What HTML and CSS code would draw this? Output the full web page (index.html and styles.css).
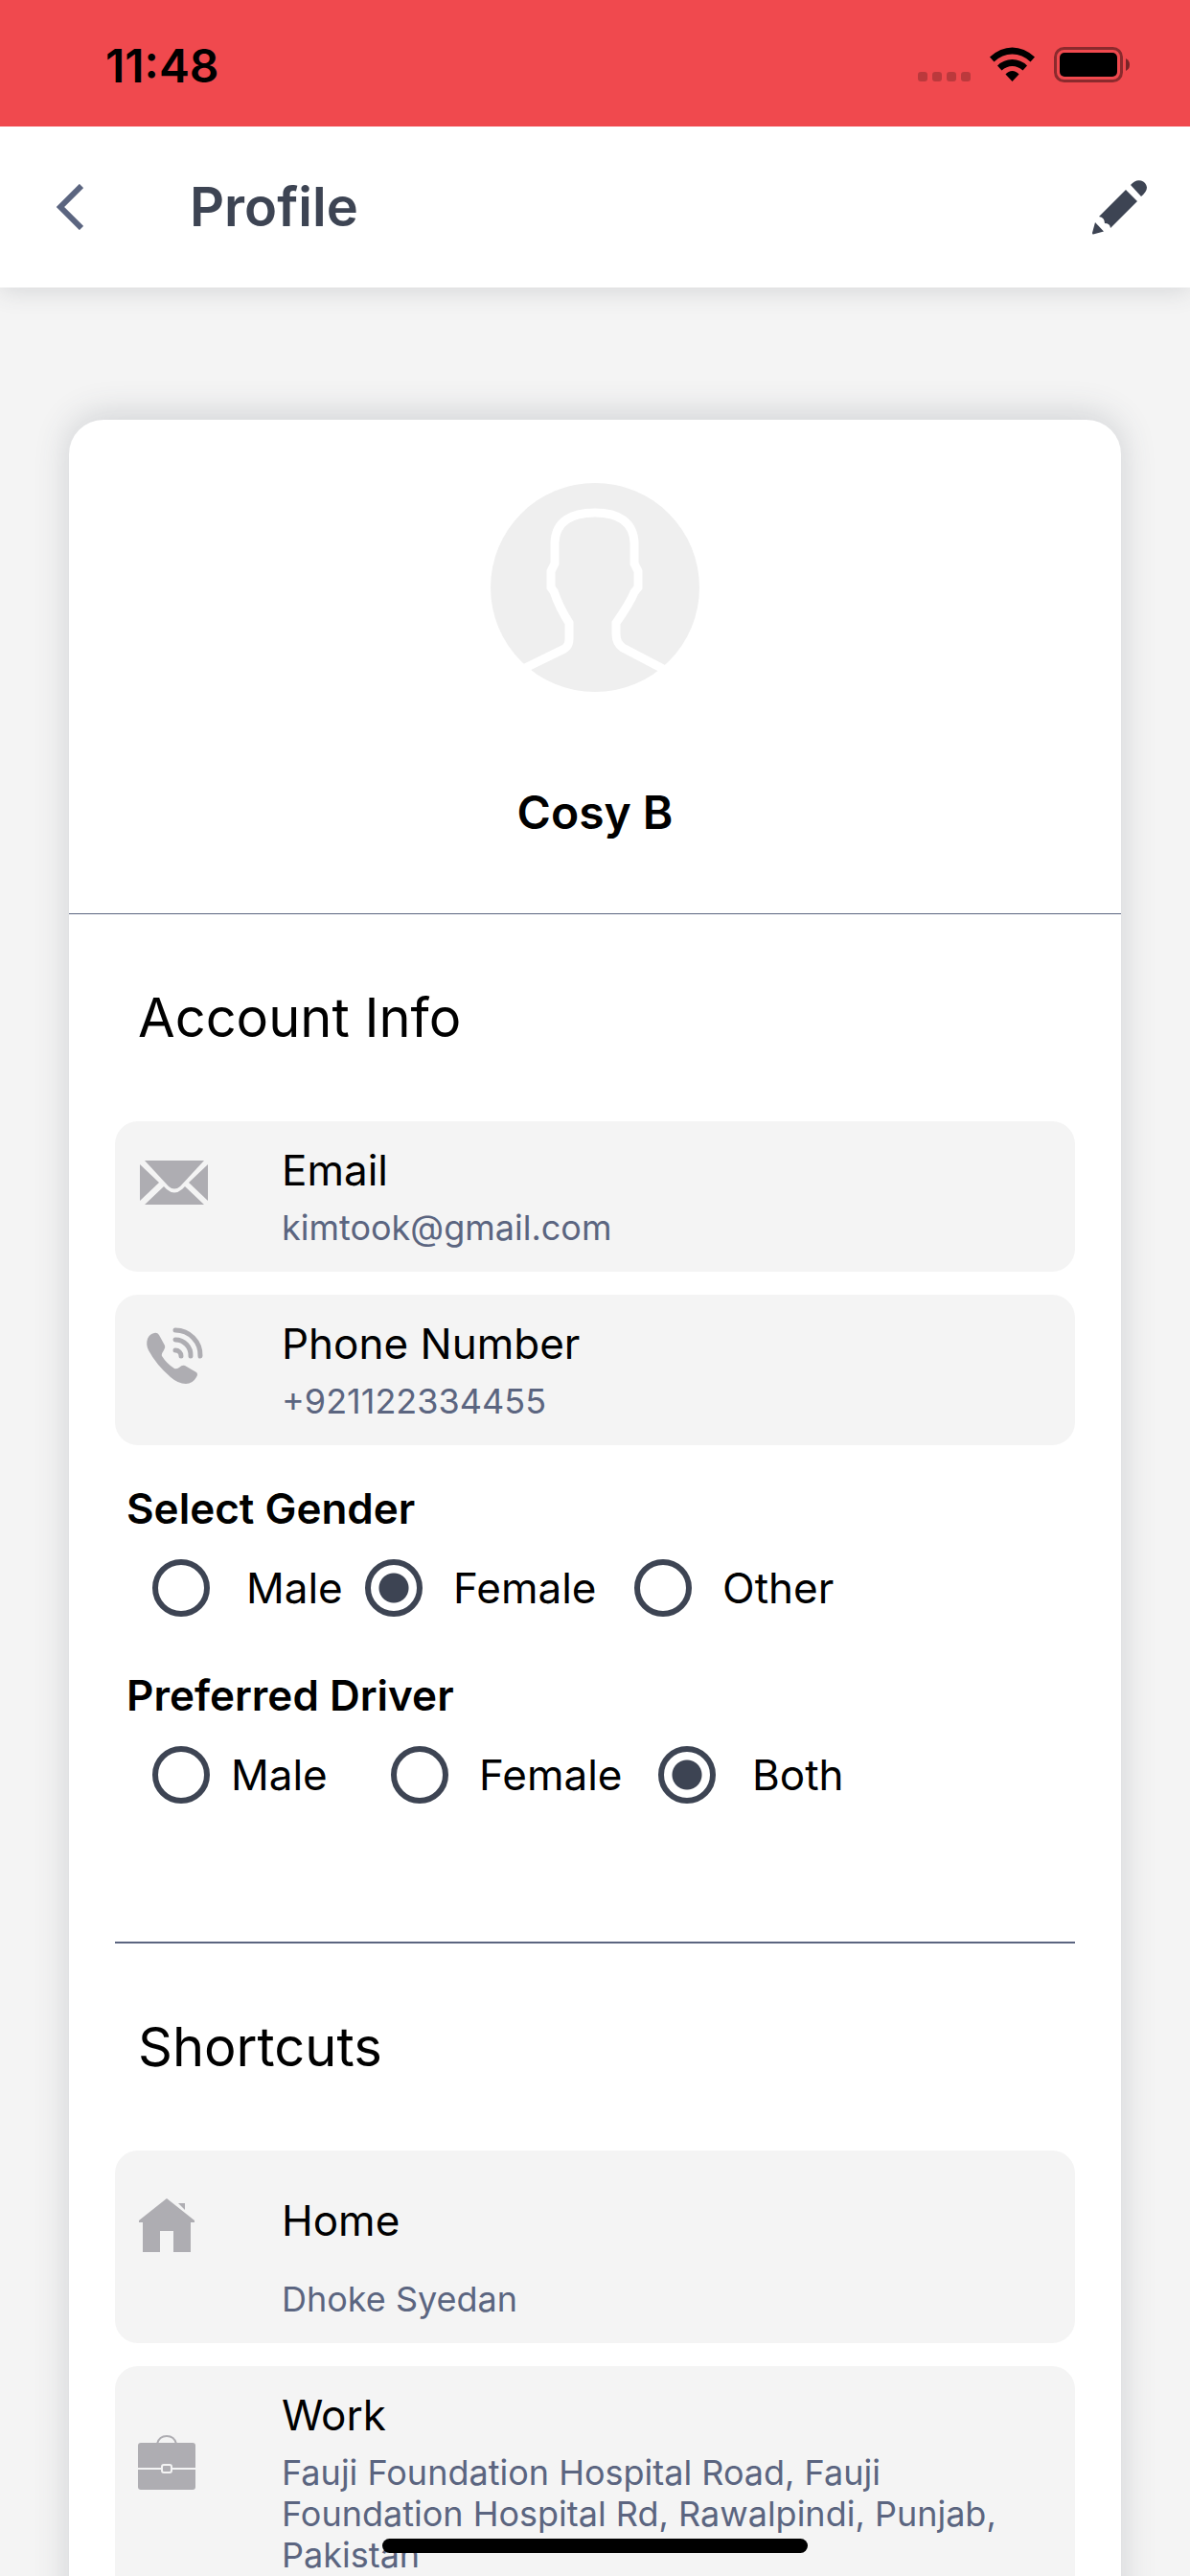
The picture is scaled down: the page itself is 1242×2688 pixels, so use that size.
FILE: index.html
```html
<!DOCTYPE html>
<html lang="en">
<head>
  <meta charset="UTF-8">
  <meta name="viewport" content="width=device-width, initial-scale=1.0">
  <title>Profile</title>
  <link rel="stylesheet" href="styles.css">
</head>
<body>
  <div class="status-bar">
    <span class="time">11:48</span>
    <svg class="status-icons" width="222" height="38" viewBox="0 0 222 38" aria-hidden="true">
      <g fill="#000" fill-opacity=".22">
        <rect x="0" y="26" width="10" height="10" rx="3"/>
        <rect x="15" y="26" width="10" height="10" rx="3"/>
        <rect x="30" y="26" width="10" height="10" rx="3"/>
        <rect x="45" y="26" width="10" height="10" rx="3"/>
      </g>
      <path d="M98.500 0.500Q111 0.500 122 10.500L117.500 15.500Q109 7.500 98.500 7.500T79.500 15.500L75 10.500Q86 0.500 98.500 0.500z"/>
      <path d="M98.500 13Q107.500 13 114 19.500L109.500 24.500Q104.500 20 98.500 20T87.500 24.500L83 19.500Q89.500 13 98.500 13z"/>
      <path d="M98.500 25Q102.500 25 105.500 28.500L98.500 36L91.500 28.500Q94.500 25 98.500 25z"/>
      <rect x="143.500" y="1.500" width="69" height="34" rx="9" fill="none" stroke="#000" stroke-opacity=".42" stroke-width="3"/>
      <rect x="148" y="6" width="60" height="25" rx="5"/>
      <path d="M217 12Q221 14 221 18.500T217 25z" fill-opacity=".5"/>
    </svg>
  </div>

  <header class="navbar">
    <button class="icon-btn" type="button" aria-label="Back">
      <svg width="28" height="48" viewBox="0 0 28 48"><path d="M26 2L4 24L26 46" fill="none" stroke="#5b6580" stroke-width="6"/></svg>
    </button>
    <h1>Profile</h1>
    <button class="icon-btn" type="button" aria-label="Edit profile">
      <svg width="58" height="58" viewBox="0 0 58 58" fill="#3d4453">
        <path d="M40 6Q45 0 51 1.500Q56 3 57 8.500Q57 13 51 18z"/>
        <path d="M35 11L47 23L19 51Q18.500 46 13 46Q13 40 7 39z"/>
        <path d="M3 45L12 54.500L1 57.500Q0 57.500 0 56z"/>
      </svg>
    </button>
  </header>

  <main>
    <div class="card">
      <div class="profile">
        <svg class="avatar" width="218" height="218" viewBox="0 0 218 218" aria-hidden="true">
          <circle cx="109" cy="109" r="109" fill="#efefef"/>
          <path d="M32 195L77 173Q82 170 82 163V146C75 135 69 122 66 113L63 109V92L67 84V62C68 40 84 31 109 31S149 41 150 62V84L154 92V109L150 114C146 124 138 136 131 146V158Q131 167 138 172L182 195" fill="none" stroke="#fff" stroke-width="9"/>
        </svg>
        <h2>Cosy B</h2>
      </div>

      <section>
        <h3>Account Info</h3>
        <div class="row">
          <div class="row-icon">
            <svg width="72" height="46" viewBox="0 0 72 46" fill="#aeadb2">
              <path d="M5 0H67L42 27Q36 32 30 27z"/>
              <path d="M0 4L20 23L0 42z"/>
              <path d="M71 4V42L51 23z"/>
              <path d="M5 46L25 27L28 30Q36 37 44 30L47 27L67 46z"/>
            </svg>
          </div>
          <div>
            <div class="label">Email</div>
            <div class="value">kimtook@gmail.com</div>
          </div>
        </div>
        <div class="row">
          <div class="row-icon">
            <svg width="60" height="60" viewBox="0 0 60 60" fill="#aeadb2">
              <path d="M9 6Q12 5 14 8L20 19Q21 21 19 24Q16 28 17 30Q22 38 30 43Q32 44 35 42Q38 39 41 40L53 47Q55 49 53 52Q49 59 42 59Q34 59 26 52Q11 39 3 24Q0 18 2 12Q4 7 9 6z"/>
              <path d="M31 3A26 26 0 0 1 57 30M31 13A16 16 0 0 1 47 30M31 24A6 6 0 0 1 37 30" fill="none" stroke="#aeadb2" stroke-width="5" stroke-linecap="round"/>
            </svg>
          </div>
          <div>
            <div class="label">Phone Number</div>
            <div class="value">+921122334455</div>
          </div>
        </div>

        <fieldset>
          <legend>Select Gender</legend>
          <div class="options gender">
            <label class="wide"><input type="radio" name="gender"> Male</label>
            <label><input type="radio" name="gender" checked> Female</label>
            <label><input type="radio" name="gender"> Other</label>
          </div>
        </fieldset>
        <fieldset>
          <legend>Preferred Driver</legend>
          <div class="options driver">
            <label class="narrow"><input type="radio" name="driver"> Male</label>
            <label><input type="radio" name="driver"> Female</label>
            <label class="wide"><input type="radio" name="driver" checked> Both</label>
          </div>
        </fieldset>
      </section>

      <section class="shortcuts">
        <h3>Shortcuts</h3>
        <div class="row home">
          <div class="row-icon">
            <svg width="58" height="56" viewBox="0 0 58 56" fill="#aeadb2">
              <path d="M29 0L58 23V25H54V56H36V34H22V56H4V25H0V23z"/>
              <path d="M41 5H48V12z"/>
            </svg>
          </div>
          <div>
            <div class="label">Home</div>
            <div class="value">Dhoke Syedan</div>
          </div>
        </div>
        <div class="row work">
          <div class="row-icon">
            <svg width="60" height="57" viewBox="0 0 60 57">
              <path d="M20 9Q22 1 30 1T40 9" fill="none" stroke="#aeadb2" stroke-width="2"/>
              <rect y="8" width="60" height="49" rx="3" fill="#aeadb2"/>
              <path d="M0 35H60" stroke="#f4f4f4" stroke-width="2"/>
              <rect x="25" y="31" width="10" height="8" rx="2" fill="#aeadb2" stroke="#f4f4f4" stroke-width="2"/>
            </svg>
          </div>
          <div>
            <div class="label">Work</div>
            <div class="value">Fauji Foundation Hospital Road, Fauji Foundation Hospital Rd, Rawalpindi, Punjab, Pakistan</div>
          </div>
        </div>
      </section>
    </div>
  </main>

  <div class="home-indicator"></div>
</body>
</html>
```
FILE: styles.css
```css
* {
  box-sizing: border-box;
}
body {
  margin: 0;
  height: 100vh;
  display: flex;
  flex-direction: column;
  overflow: hidden;
  font-family: Inter, Roboto, sans-serif;
  background-color: #f4f4f4;
  color: #000;
}
h1, h2, h3 {
  margin: 0;
}
.status-bar {
  flex: none;
  display: flex;
  justify-content: space-between;
  align-items: center;
  height: 132px;
  padding: 4px 62px 0 110px;
  background-color: #f0494e;
}
.time {
  font-size: 48px;
  font-weight: 600;
}
.navbar {
  flex: none;
  display: flex;
  align-items: center;
  height: 168px;
  padding: 0 44px 0 59px;
  background-color: #fff;
  box-shadow: 0 4px 24px rgba(61, 68, 83, .16);
  clip-path: inset(0 0 -48px 0);
  z-index: 1;
}
.navbar h1 {
  flex: 1;
  margin-left: 111px;
  font-size: 56px;
  font-weight: 600;
  color: #3d4453;
}
.icon-btn {
  padding: 0;
  border: none;
  background: none;
  cursor: pointer;
}
.icon-btn svg {
  display: block;
}
main {
  flex: 1;
  min-height: 0;
  padding: 138px 72px 0;
  overflow-y: auto;
  scrollbar-width: none;
}
.card {
  background-color: #fff;
  border-radius: 36px;
  box-shadow: 0 -5px 36px rgba(61, 68, 83, .2);
}
.profile {
  display: flex;
  flex-direction: column;
  align-items: center;
  gap: 96px;
  padding: 66px 0 75px;
  border-bottom: 1px solid #5b6580;
}
.profile h2 {
  font-size: 48px;
  line-height: 60px;
  font-weight: 600;
}
section {
  margin: 0 48px;
}
section h3 {
  padding: 72px 24px;
  font-size: 56px;
  line-height: 72px;
  font-weight: 400;
}
.shortcuts {
  margin-top: 144px;
  padding-bottom: 72px;
  border-top: 2px solid #5b6580;
}
.row {
  display: flex;
  padding: 21px 48px 24px 24px;
  margin-bottom: 24px;
  border-radius: 24px;
  background-color: #f4f4f4;
}
.row-icon {
  flex: none;
  display: flex;
  align-items: center;
  justify-content: center;
  width: 76px;
  height: 86px;
  margin-right: 74px;
}
.label {
  font-size: 44px;
  line-height: 60px;
}
.value {
  margin-top: 9px;
  font-size: 36px;
  line-height: 43px;
  color: #5b6580;
}
.home {
  padding-top: 43px;
}
.home .value {
  margin-top: 31px;
}
.shortcuts .row-icon {
  width: 60px;
  height: 70px;
  margin-right: 90px;
}
.work .row-icon {
  height: 158px;
}
fieldset {
  margin: 0;
  padding: 0;
  border: none;
}
legend {
  padding: 12px 12px 23px;
  font-size: 44px;
  line-height: 60px;
  font-weight: 600;
}
fieldset + fieldset {
  margin-top: 40px;
}
.options {
  display: grid;
  padding-left: 39px;
}
.gender {
  grid-template-columns: 222px 281px 1fr;
}
.driver {
  grid-template-columns: 249px 279px 1fr;
}
.options label {
  display: flex;
  align-items: center;
  gap: 32px;
  font-size: 44px;
  line-height: 60px;
  white-space: nowrap;
}
.options .narrow {
  gap: 22px;
}
.options .wide {
  gap: 38px;
}
input[type="radio"] {
  flex: none;
  appearance: none;
  width: 60px;
  height: 60px;
  margin: 0;
  border: 6px solid #3d4453;
  border-radius: 50%;
}
input[type="radio"]:checked {
  background: radial-gradient(circle, #3d4453 15px, #fff 16px);
}
.home-indicator {
  position: fixed;
  bottom: 24px;
  left: 50%;
  width: 444px;
  height: 15px;
  margin-left: -222px;
  border-radius: 8px;
  background-color: #000;
  z-index: 2;
}
```
